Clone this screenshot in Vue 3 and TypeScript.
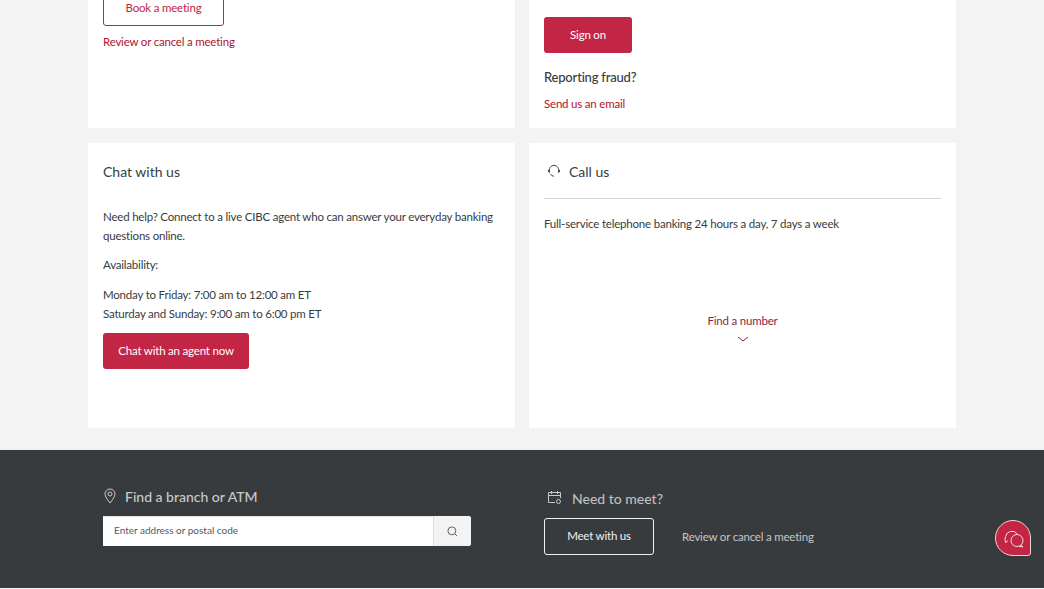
<script setup lang="ts">
const hours: string[] = [
  'Monday to Friday: 7:00 am to 12:00 am ET',
  'Saturday and Sunday: 9:00 am to 6:00 pm ET',
]
</script>

<template>
  <div class="page">
    <main class="cards">
      <section class="card top">
        <a class="btn outline cut">Book a meeting</a>
        <a class="link review">Review or cancel a meeting</a>
      </section>
      <section class="card top">
        <a class="btn solid signon">Sign on</a>
        <p class="fraud">Reporting fraud?</p>
        <a class="link email">Send us an email</a>
      </section>
      <section class="card bottom">
        <h2 class="chat-title">Chat with us</h2>
        <p class="help">Need help? Connect to a live CIBC agent who can answer your everyday banking questions online.</p>
        <p class="avail">Availability:</p>
        <p v-for="h in hours" :key="h" class="hours">{{ h }}</p>
        <a class="btn solid agent">Chat with an agent now</a>
      </section>
      <section class="card bottom">
        <h2 class="call-title">
          <svg class="call-icon" viewBox="0 0 14 14" width="14" height="14" fill="none" stroke="#3a3d40" stroke-width="1">
            <path d="M2.6 8.4C1.6 4.6 3.6 1.4 7 1.4s5.4 3.2 4.4 7" />
            <path d="M2.2 5.6 1 7l1.6 1.4M11.8 5.6 13 7l-1.6 1.4" />
            <path d="M3.6 10.2c.8 1.3 2 1.900 3.400 1.900" />
          </svg>
          Call us
        </h2>
        <p class="service">Full-service telephone banking 24 hours a day, 7 days a week</p>
        <a class="find">
          Find a number
          <svg viewBox="0 0 12 6" width="12" height="6" fill="none" stroke="#8c1d46" stroke-width="1">
            <path d="M1 1l5 4 5-4" />
          </svg>
        </a>
      </section>
    </main>

    <footer class="footer">
      <div class="foot-col branch">
        <h3 class="foot-title">
          <svg viewBox="0 0 12 16" width="12" height="16" fill="none" stroke="#c9cacb" stroke-width="1">
            <path d="M6 15C3 11 1 8.500 1 6a5 5 0 0 1 10 0c0 2.500-2 5-5 9z" />
            <circle cx="6" cy="6" r="2" />
          </svg>
          Find a branch or ATM
        </h3>
        <div class="search">
          <span class="placeholder">Enter address or postal code</span>
          <span class="search-btn">
            <svg viewBox="0 0 12 12" width="11" height="11" fill="none" stroke="#55585b" stroke-width="1">
              <circle cx="5.300" cy="5.300" r="4.300" />
              <path d="M8.500 8.500 11 11" />
            </svg>
          </span>
        </div>
      </div>
      <div class="foot-col meet">
        <h3 class="foot-title meet-title">
          <svg viewBox="0 0 15 15" width="15" height="15" fill="none" stroke="#c9cacb" stroke-width="1">
            <path d="M8 12.500H1.500v-10h12V8" />
            <path d="M1.500 5.500h12M4.500 1v3M10.500 1v3" />
            <circle cx="11.500" cy="11.500" r="2" />
          </svg>
          Need to meet?
        </h3>
        <div class="meet-row">
          <a class="btn ghost">Meet with us</a>
          <a class="foot-link">Review or cancel a meeting</a>
        </div>
      </div>
    </footer>

    <div class="bubble">
      <svg viewBox="0 0 24 24" width="24" height="24" fill="none" stroke="#f4dbe1" stroke-width="1">
        <path d="M7 14.800 4.600 16.500C4 14.500 3.900 12.500 4.600 10.500A6.500 6.500 0 0 1 16.300 8" />
        <circle cx="16" cy="14.500" r="6" />
        <path d="M19.800 19.200 22 21l-3.700-.7" />
      </svg>
    </div>
  </div>
</template>

<style>
html, body {
  margin: 0;
  background: #f3f3f3;
}
</style>

<style scoped>
.page {
  position: relative;
  height: 589px;
  overflow: hidden;
  background: #f3f3f3;
  font-family: Lato, "Open Sans", sans-serif;
  font-size: 11.500px;
  letter-spacing: -0.2px;
  color: #383b3e;
}
p, h2, h3 { margin: 0; font-weight: 400; }
a { display: block; }
.cards {
  display: grid;
  grid-template-columns: 427px 427px;
  grid-template-rows: 128px 285px;
  gap: 15px 14px;
  padding-left: 88px;
  height: 428px;
}
.card {
  background: #fff;
  padding: 0 15px;
  overflow: hidden;
}
.btn {
  display: flex;
  align-items: center;
  justify-content: center;
  box-sizing: border-box;
  height: 36px;
  padding-bottom: 2px;
  border-radius: 3px;
  font-size: 11.500px;
}
.outline {
  width: 121px;
  border: 1px solid #c3243f;
  color: #c3243f;
}
.cut { margin-top: -10px; }
.solid {
  background: #c22644;
  color: #fff;
}
.link {
  color: #b2112f;
  line-height: 16px;
}
.review { margin-top: 8px; }
.signon { width: 88px; margin-top: 17px; }
.fraud {
  margin-top: 15px;
  font-size: 13px;
  font-weight: 500;
  line-height: 18px;
}
.email { margin-top: 10px; }
.chat-title, .call-title {
  font-size: 14px;
  letter-spacing: 0;
  line-height: 20px;
  margin-top: 19px;
}
.help {
  margin-top: 25px;
  line-height: 19px;
}
.avail { margin-top: 10px; line-height: 19px; }
.hours { line-height: 19px; }
.avail + .hours { margin-top: 11px; }
.agent { width: 146px; margin-top: 10px; }
.call-title {
  display: flex;
  align-items: center;
  gap: 8px;
  padding: 0 0 16px 3px;
  border-bottom: 1px solid #d6d7d8;
}
.call-icon { margin-top: -2px; }
.service { margin-top: 15px; line-height: 19px; }
.find {
  display: flex;
  flex-direction: column;
  align-items: center;
  gap: 7px;
  margin-top: 80px;
  color: #8c1d46;
  line-height: 16px;
}
.footer {
  position: absolute;
  left: 0;
  right: 0;
  top: 450px;
  height: 138px;
  display: flex;
  padding-left: 103px;
  background: #383b3e;
  border-bottom: 1px solid #f3f3f3;
}
.foot-col { display: flex; flex-direction: column; }
.branch { width: 441px; }
.foot-title {
  display: flex;
  align-items: center;
  gap: 9px;
  font-size: 14px;
  font-weight: 500;
  letter-spacing: 0;
  line-height: 20px;
  color: #c9cacb;
  margin-top: 37px;
}
.branch .foot-title svg { margin-left: 1px; margin-top: -3px; }
.meet-title { gap: 10px; margin-top: 39px; color: #bdbebf; }
.meet-title svg { margin-left: 3px; margin-top: -3px; }
.search {
  display: flex;
  width: 368px;
  height: 30px;
  margin-top: 9px;
  box-sizing: border-box;
  border-radius: 0 3px 3px 0;
  overflow: hidden;
  background: #fff;
  box-shadow: inset 0 1px 0 #e4e4e4;
}
.placeholder {
  flex: 1;
  display: flex;
  align-items: center;
  padding: 0 0 2px 11px;
  font-size: 10px;
  letter-spacing: 0;
  color: #55585b;
}
.search-btn {
  width: 37px;
  display: flex;
  align-items: center;
  justify-content: center;
  background: #f3f3f3;
  border-left: 1px solid #dcdcdc;
}
.meet-row {
  display: flex;
  align-items: center;
  gap: 28px;
  margin-top: 9px;
}
.ghost {
  width: 110px;
  height: 37px;
  border: 1px solid #f1f1f1;
  color: #f1f1f1;
}
.foot-link { color: #c4c5c6; }
.bubble {
  position: absolute;
  left: 995px;
  top: 520px;
  width: 36px;
  height: 36px;
  display: flex;
  align-items: center;
  justify-content: center;
  box-sizing: border-box;
  background: #c22644;
  border: 1px solid #eed5da;
  border-radius: 50% 50% 3px 50%;
}
</style>
